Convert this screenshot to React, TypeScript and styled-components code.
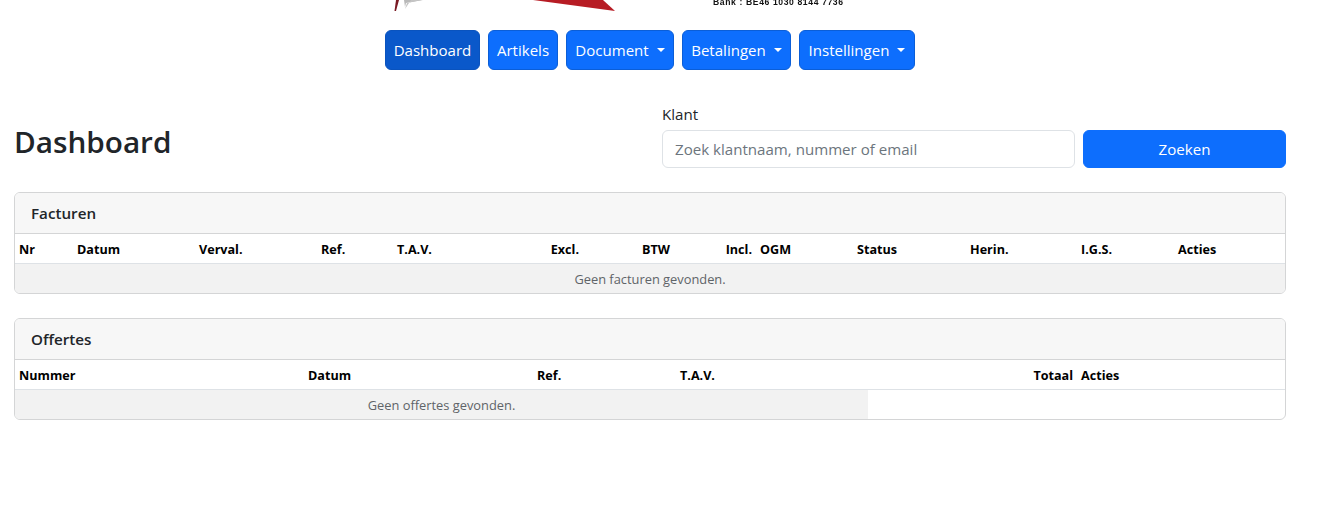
import React from 'react';
import styled, { createGlobalStyle } from 'styled-components';

const Global = createGlobalStyle`
  html, body { margin: 0; padding: 0; background: #fff; }
  body { font-family: "Open Sans", "Noto Sans", sans-serif; font-size: 15px; color: #212529; }
`;
const Page = styled.div`
  width: 1272px;
  margin-left: 14px;
`;
const LogoStrip = styled.div`
  height: 12px;
  display: flex;
  justify-content: center;
  overflow: hidden;
`;
const LogoImage = styled.svg`
  filter: blur(0.3px);
`;
const Nav = styled.nav`
  display: flex;
  justify-content: center;
  gap: 8px;
  margin-top: 18px;
`;
const NavButton = styled.button<{ $active?: boolean; $w: number }>`
  width: ${p => p.$w}px;
  height: 40px;
  padding: 0;
  display: flex;
  align-items: center;
  justify-content: center;
  font: inherit;
  font-size: 15.05px;
  color: #fff;
  background: ${p => (p.$active ? '#0a58ca' : '#0d6efd')};
  border: 1px solid ${p => (p.$active ? '#0a53be' : '#0b5ed7')};
  border-radius: 6px;
`;
const Caret = styled.span`
  margin-left: 8px;
  width: 0;
  height: 0;
  border-top: 4.8px solid #fff;
  border-left: 4.8px solid transparent;
  border-right: 4.8px solid transparent;
`;
const TopRow = styled.div`
  display: flex;
  justify-content: space-between;
  align-items: flex-end;
  margin-top: 32px;
`;
const Title = styled.h1`
  margin: 0 0 8px;
  font-size: 29.7px;
  font-weight: 600;
  line-height: 37px;
  color: #212529;
`;
const SearchForm = styled.form`
  width: 624px;
  display: grid;
  grid-template-columns: 413px 203px;
  column-gap: 8px;
  row-gap: 3px;
`;
const Label = styled.label`
  grid-column: 1 / -1;
  font-size: 15.1px;
  line-height: 25px;
`;
const SearchInput = styled.input`
  box-sizing: border-box;
  height: 38px;
  padding: 0 12px;
  font: inherit;
  font-size: 15.1px;
  color: #212529;
  border: 1px solid #dee2e6;
  border-radius: 6px;
  outline: none;
  &::placeholder { color: #6c757d; opacity: 1; }
`;
const SearchButton = styled.button`
  height: 38px;
  font: inherit;
  font-size: 15.1px;
  color: #fff;
  background: #0d6efd;
  border: 1px solid #0d6efd;
  border-radius: 6px;
`;
const Card = styled.section`
  margin-top: 24px;
  border: 1px solid #d4d5d6;
  border-radius: 6px;
  overflow: hidden;
  background: #fff;
`;
const CardHeader = styled.h2`
  margin: 0;
  box-sizing: border-box;
  height: 41px;
  padding: 0 16px;
  display: flex;
  align-items: center;
  font-size: 15.2px;
  font-weight: 600;
  color: #212529;
  background: #f7f7f7;
  border-bottom: 1px solid #d4d5d6;
`;
const Table = styled.table`
  width: 1270px;
  table-layout: fixed;
  border-collapse: separate;
  border-spacing: 0;
`;
const Th = styled.th<{ $right?: boolean }>`
  height: 30px;
  padding: 1px 4px 0;
  box-sizing: border-box;
  font-size: 12.6px;
  font-weight: 700;
  color: #000;
  background: #fff;
  text-align: ${p => (p.$right ? 'right' : 'left')};
  border-bottom: 1px solid #dee2e6;
  white-space: nowrap;
`;
const EmptyCell = styled.td`
  height: 29px;
  padding: 0;
  box-sizing: border-box;
  font-size: 12.85px;
  color: #5f6468;
  text-align: center;
  background: #f2f2f2;
`;

type Column = { label: string; width: number; right?: boolean };
const invoiceColumns: Column[] = [
  { label: 'Nr', width: 58 }, { label: 'Datum', width: 122 }, { label: 'Verval.', width: 122 },
  { label: 'Ref.', width: 76 }, { label: 'T.A.V.', width: 117 }, { label: 'Excl.', width: 73, right: true },
  { label: 'BTW', width: 91, right: true }, { label: 'Incl.', width: 82, right: true }, { label: 'OGM', width: 97 },
  { label: 'Status', width: 113 }, { label: 'Herin.', width: 111 }, { label: 'I.G.S.', width: 97 }, { label: 'Acties', width: 111 },
];
const quoteColumns: Column[] = [
  { label: 'Nummer', width: 289 }, { label: 'Datum', width: 229 }, { label: 'Ref.', width: 143 },
  { label: 'T.A.V.', width: 192 }, { label: 'Totaal', width: 209, right: true }, { label: 'Acties', width: 208 },
];

function DataCard({ title, columns, empty, span }: { title: string; columns: Column[]; empty: string; span: number }) {
  return (
    <Card>
      <CardHeader>{title}</CardHeader>
      <Table>
        <colgroup>{columns.map(c => <col key={c.label} width={c.width} />)}</colgroup>
        <thead>
          <tr>{columns.map(c => <Th key={c.label} $right={c.right}>{c.label}</Th>)}</tr>
        </thead>
        <tbody>
          <tr><EmptyCell colSpan={span}>{empty}</EmptyCell></tr>
        </tbody>
      </Table>
    </Card>
  );
}

function Logo() {
  return (
    <LogoImage width="520" height="12" viewBox="390 0 520 12" aria-hidden="true">
      <path d="M396 0 L399 0 L396 11 L394.5 11 Z" fill="#7a1a24" />
      <path d="M405 7 L406 3 L423 0 L404 0 Z" fill="#b9b9b9" />
      <path d="M405 9 L407 3 L422 0 L411 0 Z" fill="#c4c4c4" />
      <path d="M533 0 L603 0 L615 11 Z" fill="#b71c24" />
      <text x="713" y="4.5" fontFamily="Liberation Sans, sans-serif" fontSize="8.6" fontWeight="700" fill="#111" textLength="130">Bank : BE46 1030 8144 7736</text>
    </LogoImage>
  );
}

export default function App() {
  return (
    <Page>
      <Global />
      <LogoStrip><Logo /></LogoStrip>
      <Nav>
        <NavButton $active $w={95}>Dashboard</NavButton>
        <NavButton $w={70}>Artikels</NavButton>
        <NavButton $w={108}>Document<Caret /></NavButton>
        <NavButton $w={109}>Betalingen<Caret /></NavButton>
        <NavButton $w={116}>Instellingen<Caret /></NavButton>
      </Nav>
      <TopRow>
        <Title>Dashboard</Title>
        <SearchForm onSubmit={e => e.preventDefault()}>
          <Label htmlFor="klant">Klant</Label>
          <SearchInput id="klant" placeholder="Zoek klantnaam, nummer of email" />
          <SearchButton type="submit">Zoeken</SearchButton>
        </SearchForm>
      </TopRow>
      <DataCard title="Facturen" columns={invoiceColumns} empty="Geen facturen gevonden." span={13} />
      <DataCard title="Offertes" columns={quoteColumns} empty="Geen offertes gevonden." span={4} />
    </Page>
  );
}
